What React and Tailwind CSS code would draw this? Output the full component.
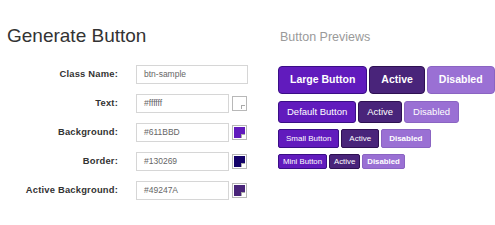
import React from 'react';

const fields = [
  { label: 'Class Name:', value: 'btn-sample' },
  { label: 'Text:', value: '#ffffff', color: '#ffffff' },
  { label: 'Background:', value: '#611BBD', color: '#611BBD' },
  { label: 'Border:', value: '#130269', color: '#130269' },
  { label: 'Active Background:', value: '#49247A', color: '#49247A' },
];

const Swatch = ({ color }) => (
  <div className="relative w-[15px] h-[15px] border border-[#b8b8b8] bg-white p-[1px]">
    <div className="w-full h-full" style={{ backgroundColor: color }} />
    <div className="absolute right-[1px] bottom-[1px] w-[4px] h-[4px] bg-white border-l border-t border-[#aaaaaa]" />
  </div>
);

const sizes = {
  large: 'h-[28px] px-[11px] text-[10.5px] font-bold rounded-[4px]',
  default: 'h-[22px] px-[8px] text-[9.5px] rounded-[3px]',
  small: 'h-[19px] px-[7px] text-[8px] rounded-[2px]',
  mini: 'h-[15px] px-[4px] text-[7.8px] rounded-[2px]',
};

const Btn = ({ size, kind, children }) => {
  const tone =
    kind === 'active'
      ? 'bg-[#49247A] border-[#2e1052]'
      : kind === 'disabled'
      ? `bg-[#9a70d4] border-[#8a64c2] ${size === 'default' ? '' : 'font-bold'}`
      : 'bg-[#611BBD] border-[#3a0e86]';
  return (
    <div className={`flex items-center border text-white ${sizes[size]} ${tone}`}>
      {children}
    </div>
  );
};

const rows = [
  { size: 'large', label: 'Large Button' },
  { size: 'default', label: 'Default Button' },
  { size: 'small', label: 'Small Button' },
  { size: 'mini', label: 'Mini Button' },
];

export default function App() {
  return (
    <div className="w-[495px] h-[225px] bg-white flex font-['Liberation_Sans',Arial,sans-serif] overflow-hidden">
      <div className="w-[278px] shrink-0">
        <h1 className="mt-[24px] ml-[7px] text-[19px] leading-[24px] text-[#333]">Generate Button</h1>
        <div className="mt-[17px] flex flex-col gap-[10px]">
          {fields.map(f => (
            <div key={f.label} className="flex items-center h-[19px]">
              <div className="w-[118px] text-right text-[9.4px] font-bold text-[#333] tracking-[0.2px]">{f.label}</div>
              <div className={`ml-[18px] h-[19px] border border-[#d6d6d6] flex items-center px-[7px] text-[8.5px] text-[#666] ${f.color ? 'w-[93px]' : 'w-[112px]'}`}>
                {f.value}
              </div>
              {f.color && <div className="ml-[3px]"><Swatch color={f.color} /></div>}
            </div>
          ))}
        </div>
      </div>
      <div className="flex-1">
        <h2 className="mt-[30px] ml-[2px] text-[12.5px] leading-[15px] text-[#9a9a9a]">Button Previews</h2>
        <div className="mt-[21px] flex flex-col">
          {rows.map((r, i) => (
            <div key={r.size} className={`flex gap-[2px] ${i === 0 ? '' : i === 1 ? 'mt-[7px]' : 'mt-[6px]'}`}>
              <Btn size={r.size}>{r.label}</Btn>
              <Btn size={r.size} kind="active">Active</Btn>
              <Btn size={r.size} kind="disabled">Disabled</Btn>
            </div>
          ))}
        </div>
      </div>
    </div>
  );
}
